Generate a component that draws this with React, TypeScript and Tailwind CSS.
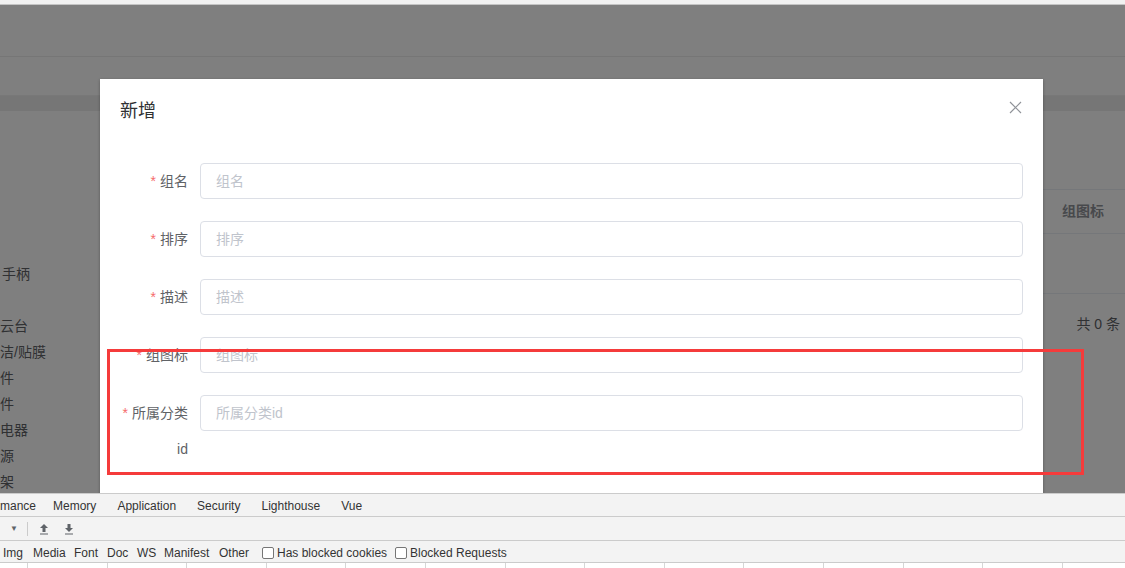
import React from 'react';

// visible tail of the scrolled-off sidebar menu
const sideItems = [
  { text: '手柄', shift: 'ml-[2px]' },
  { text: '', shift: '' },
  { text: '云台', shift: 'ml-0' },
  { text: '洁/贴膜', shift: 'ml-0' },
  { text: '件', shift: 'ml-0' },
  { text: '件', shift: 'ml-0' },
  { text: '电器', shift: 'ml-0' },
  { text: '源', shift: 'ml-0' },
  { text: '架', shift: 'ml-0' },
];

const formItems = [
  { label: '组名', placeholder: '组名' },
  { label: '排序', placeholder: '排序' },
  { label: '描述', placeholder: '描述' },
  { label: '组图标', placeholder: '组图标' },
];

const devTabs = ['mance', 'Memory', 'Application', 'Security', 'Lighthouse', 'Vue'];
const filters = [
  { name: 'Img', w: 'w-[30px]' },
  { name: 'Media', w: 'w-[41px]' },
  { name: 'Font', w: 'w-[33px]' },
  { name: 'Doc', w: 'w-[30px]' },
  { name: 'WS', w: 'w-[27px]' },
  { name: 'Manifest', w: 'w-[55px]' },
  { name: 'Other', w: 'w-[43px]' },
];

function Checkbox({ label, className }: { label: string; className?: string }) {
  return (
    <div className={`flex items-center gap-[3px] ${className ?? ''}`}>
      <span className="h-[12px] w-[12px] shrink-0 rounded-[2px] border border-[#767676] bg-white" />
      <span className="whitespace-nowrap">{label}</span>
    </div>
  );
}

function ArrowIcon({ down }: { down?: boolean }) {
  return (
    <svg width="10" height="12" viewBox="0 0 10 12" className="text-[#5f6368]">
      {down ? (
        <path d="M3.5 1h3v4h2.5L5 9 1 5h2.5z M1 10.5h8v1H1z" fill="currentColor" />
      ) : (
        <path d="M3.5 9h3V5h2.5L5 1 1 5h2.5z M1 10.5h8v1H1z" fill="currentColor" />
      )}
    </svg>
  );
}

export default function App() {
  return (
    <div className="flex h-[568px] w-[1125px] flex-col overflow-hidden bg-white font-['Liberation_Sans','Noto_Sans_CJK_SC',sans-serif]">
      {/* browser edge */}
      <div className="h-[5px] shrink-0 border-b border-[#c4c4c4] bg-[#f1f1f1]" />

      {/* page under dialog */}
      <div className="relative h-[488px] shrink-0 overflow-hidden bg-white">
        <div className="h-[52px] border-b border-[#ececec]" />
        <div className="h-[39px] border-b border-[#f0f0f0]" />
        <div className="h-[15px] bg-[#ededed]" />

        <div className="flex">
          {/* sidebar (scrolled off) */}
          <div className="w-[100px] shrink-0 overflow-hidden pt-[150px] text-[14px] text-[#606266]">
            {sideItems.map((item, i) => (
              <div key={i} className={`h-[26px] whitespace-nowrap leading-[26px] ${item.shift}`}>
                {item.text}
              </div>
            ))}
          </div>

          {/* main content */}
          <div className="flex flex-1 justify-end">
            <div className="w-[82px] pt-[78px]">
              <div className="flex h-[45px] items-center justify-center border-y border-[#ebeef5] pr-[2px] text-[14px] font-bold text-[#909399]">
                组图标
              </div>
              <div className="h-[60px] border-b border-[#ebeef5]" />
              <div className="pt-[20px] pr-[5px] text-right text-[14px] text-[#606266]">共 0 条</div>
            </div>
          </div>
        </div>

        {/* overlay */}
        <div className="absolute inset-0 bg-black/50" />

        {/* dialog */}
        <div className="absolute left-[100px] top-[74px] h-[500px] w-[943px] bg-white shadow-[0_1px_3px_rgba(0,0,0,0.3)]">
          <div className="relative px-5 pt-5 pb-[10px]">
            <span className="text-[18px] leading-6 text-[#303133]">新增</span>
            <button className="absolute right-5 top-5 flex h-4 w-4 items-center justify-center text-[#909399]">
              <svg width="13" height="13" viewBox="0 0 13 13">
                <path d="M1 1l11 11M12 1L1 12" stroke="currentColor" strokeWidth="1.2" />
              </svg>
            </button>
          </div>

          <div className="px-5 pt-[29px]">
            {formItems.map((f) => (
              <div key={f.label} className="mb-[22px] flex">
                <label className="w-[80px] shrink-0 pr-3 text-right text-[14px] leading-9 text-[#606266]">
                  <span className="mr-1 text-[#f56c6c]">*</span>
                  {f.label}
                </label>
                <input
                  placeholder={f.placeholder}
                  className="h-9 flex-1 rounded border border-[#dcdfe6] px-[15px] text-[14px] text-[#606266] outline-none placeholder:text-[#c0c4cc]"
                />
              </div>
            ))}
            <div className="mb-[22px] flex">
              <label className="w-[80px] shrink-0 pr-3 text-right text-[14px] leading-9 text-[#606266]">
                <span className="mr-1 text-[#f56c6c]">*</span>
                所属分类
                <br />
                id
              </label>
              <input
                placeholder="所属分类id"
                className="h-9 flex-1 rounded border border-[#dcdfe6] px-[15px] text-[14px] text-[#606266] outline-none placeholder:text-[#c0c4cc]"
              />
            </div>
          </div>
        </div>

        {/* red annotation box */}
        <div className="absolute left-[107px] top-[344px] h-[126px] w-[977px] border-[3px] border-[#f53b3b]" />
      </div>

      {/* devtools */}
      <div className="flex flex-1 flex-col border-t border-[#cbcbcb] bg-[#f3f3f3] text-[12px] text-[#333]">
        <div className="flex h-[23px] shrink-0 items-center gap-[21px] border-b border-[#cbcbcb] pt-[1px]">
          {devTabs.map((t, i) => (
            <span key={t} className={i === 0 ? '-mr-[4px]' : ''}>
              {t}
            </span>
          ))}
        </div>
        <div className="flex h-[24px] shrink-0 items-center border-b border-[#cbcbcb] text-[#5f6368]">
          <span className="ml-[10px] text-[8px]">▼</span>
          <span className="ml-[9px] h-[14px] w-px bg-[#cbcbcb]" />
          <span className="ml-[11px] flex"><ArrowIcon /></span>
          <span className="ml-[15px] flex"><ArrowIcon down /></span>
        </div>
        <div className="flex h-[22px] shrink-0 items-center border-b border-[#cbcbcb] pl-[3px] pt-[2px]">
          {filters.map((f) => (
            <span key={f.name} className={`${f.w} shrink-0`}>
              {f.name}
            </span>
          ))}
          <Checkbox label="Has blocked cookies" className="w-[133px] shrink-0" />
          <Checkbox label="Blocked Requests" />
        </div>
        <div className="flex flex-1 bg-white pl-[27px]">
          {Array.from({ length: 14 }).map((_, i) => (
            <span key={i} className="h-full w-[79.6px] shrink-0 border-l border-[#d6d6d6]" />
          ))}
        </div>
      </div>
    </div>
  );
}
